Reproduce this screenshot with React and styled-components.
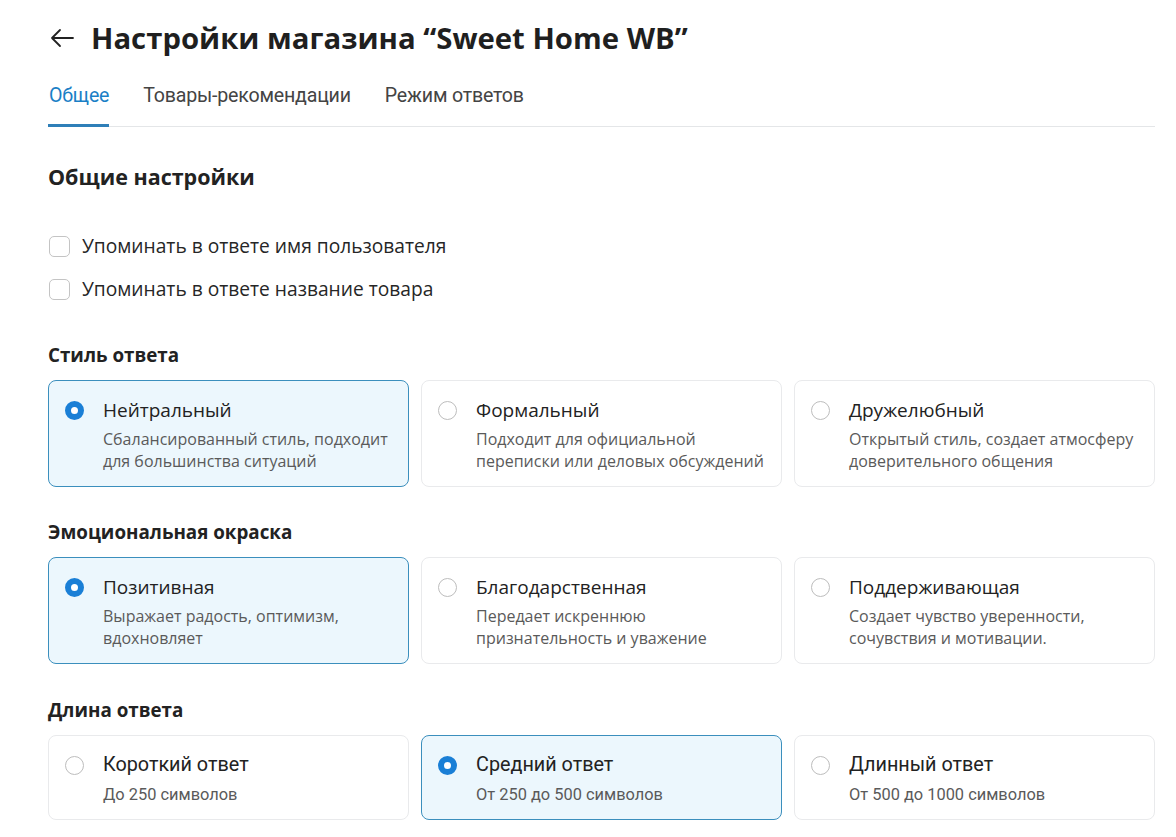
import React from "react";
import styled, { createGlobalStyle, css } from "styled-components";

const Global = createGlobalStyle`
  html, body { margin: 0; padding: 0; background: #ffffff; }
  body { font-family: "Open Sans", "Noto Sans", sans-serif; color: #222; }
  * { box-sizing: border-box; }
`;

const Page = styled.div`
  width: 1176px;
  padding: 18px 21px 0 48px;
  display: flex;
  flex-direction: column;
`;

const Header = styled.div`
  display: flex;
  align-items: center;
  gap: 16px;
  height: 40px;
`;

const BackArrow = styled.svg`
  width: 26px;
  height: 22px;
  color: #222;
  flex: none;
  margin-left: 1px;
`;

const Title = styled.h1`
  margin: 0;
  font-size: 29.3px;
  font-weight: 700;
  color: #1f1f1f;
`;

const Tabs = styled.div`
  display: flex;
  gap: 33px;
  margin-top: 26px;
  border-bottom: 1px solid #e4e6e8;
`;

const Tab = styled.div`
  font-family: "Roboto", "Open Sans", sans-serif;
  font-size: 19.6px;
  letter-spacing: -0.2px;
  line-height: 24px;
  padding-bottom: 16px;
  padding-left: 1px;
  color: ${(p) => (p.$active ? "#1a7fc6" : "#444")};
  border-bottom: 3px solid ${(p) => (p.$active ? "#2f7fb8" : "transparent")};
  margin-bottom: -1px;
`;

const H2 = styled.h2`
  margin: 36px 0 0;
  font-size: 21.5px;
  line-height: 28px;
  font-weight: 700;
  color: #222;
`;

const CheckList = styled.div`
  display: flex;
  flex-direction: column;
  gap: 17px;
  margin-top: 42px;
`;

const CheckRow = styled.label`
  display: flex;
  align-items: center;
  gap: 12px;
  font-size: 19.2px;
  line-height: 26px;
  color: #262626;
`;

const Box = styled.span`
  width: 21px;
  height: 21px;
  border: 1.5px solid #c4c4c4;
  border-radius: 5px;
  flex: none;
  margin-left: 1px;
`;

const SectionTitle = styled.h3`
  margin: ${(p) => p.$mt}px 0 0;
  font-size: 18.8px;
  line-height: 24px;
  font-weight: 700;
  color: #222;
`;

const CardGrid = styled.div`
  display: grid;
  grid-template-columns: repeat(3, 1fr);
  gap: 12px;
  margin-top: 13px;
`;

const Card = styled.div`
  border-radius: 8px;
  padding: 15.5px 16px 0 16px;
  height: ${(p) => (p.$compact ? 85 : 107)}px;
  display: grid;
  grid-template-columns: 20px 1fr;
  column-gap: 18px;
  row-gap: ${(p) => (p.$compact ? 6 : 5)}px;
  align-content: start;
  ${(p) =>
    p.$selected
      ? css`
          background: #ecf7fd;
          border: 1.5px solid #3b8fbd;
        `
      : css`
          background: #fff;
          border: 1.5px solid #e9eaec;
        `}
`;

const Radio = styled.span`
  width: 19px;
  height: 19px;
  border-radius: 50%;
  margin-top: 4px;
  ${(p) =>
    p.$checked
      ? css`
          background: #fff;
          border: 6px solid #1a7fd6;
        `
      : css`
          border: 1.5px solid #bdbdbd;
          background: #fff;
        `}
`;

const CardTitle = styled.div`
  font-size: 19px;
  color: #222;
  line-height: 26px;
  ${(p) => p.$narrow && css`font-family: "Roboto", "Open Sans", sans-serif; font-size: 19.8px;`}
`;

const CardDesc = styled.div`
  grid-column: 2;
  font-size: 16px;
  line-height: 22px;
  color: #5a5a5a;
  ${(p) => p.$narrow && css`font-family: "Roboto", "Open Sans", sans-serif; font-size: 16.4px;`}
`;

const groups = [
  {
    title: "Стиль ответа",
    mt: 41,
    items: [
      ["Нейтральный", ["Сбалансированный стиль, подходит", "для большинства ситуаций"], true],
      ["Формальный", ["Подходит для официальной", "переписки или деловых обсуждений"], false],
      ["Дружелюбный", ["Открытый стиль, создает атмосферу", "доверительного общения"], false],
    ],
  },
  {
    title: "Эмоциональная окраска",
    mt: 33,
    items: [
      ["Позитивная", ["Выражает радость, оптимизм,", "вдохновляет"], true],
      ["Благодарственная", ["Передает искреннюю", "признательность и уважение"], false],
      ["Поддерживающая", ["Создает чувство уверенности,", "сочувствия и мотивации."], false],
    ],
  },
  {
    title: "Длина ответа",
    mt: 34,
    compact: true,
    items: [
      ["Короткий ответ", ["До 250 символов"], false],
      ["Средний ответ", ["От 250 до 500 символов"], true],
      ["Длинный ответ", ["От 500 до 1000 символов"], false],
    ],
  },
];

export default function App() {
  return (
    <>
      <Global />
      <Page>
        <Header>
          <BackArrow viewBox="0 0 26 22" fill="none">
            <path d="M24 11H3M11 3L3 11L11 19" stroke="currentColor" strokeWidth="1.8" strokeLinecap="round" strokeLinejoin="round" />
          </BackArrow>
          <Title>Настройки магазина “Sweet Home WB”</Title>
        </Header>
        <Tabs>
          <Tab $active>Общее</Tab>
          <Tab>Товары-рекомендации</Tab>
          <Tab>Режим ответов</Tab>
        </Tabs>
        <H2>Общие настройки</H2>
        <CheckList>
          <CheckRow>
            <Box />
            Упоминать в ответе имя пользователя
          </CheckRow>
          <CheckRow>
            <Box />
            Упоминать в ответе название товара
          </CheckRow>
        </CheckList>
        {groups.map((g) => (
          <React.Fragment key={g.title}>
            <SectionTitle $mt={g.mt}>{g.title}</SectionTitle>
            <CardGrid>
              {g.items.map(([t, lines, sel]) => (
                <Card key={t} $selected={sel} $compact={g.compact}>
                  <Radio $checked={sel} />
                  <CardTitle $narrow={g.compact}>{t}</CardTitle>
                  <CardDesc $narrow={g.compact}>
                    {lines.map((l, i) => (
                      <div key={i}>{l}</div>
                    ))}
                  </CardDesc>
                </Card>
              ))}
            </CardGrid>
          </React.Fragment>
        ))}
      </Page>
    </>
  );
}
